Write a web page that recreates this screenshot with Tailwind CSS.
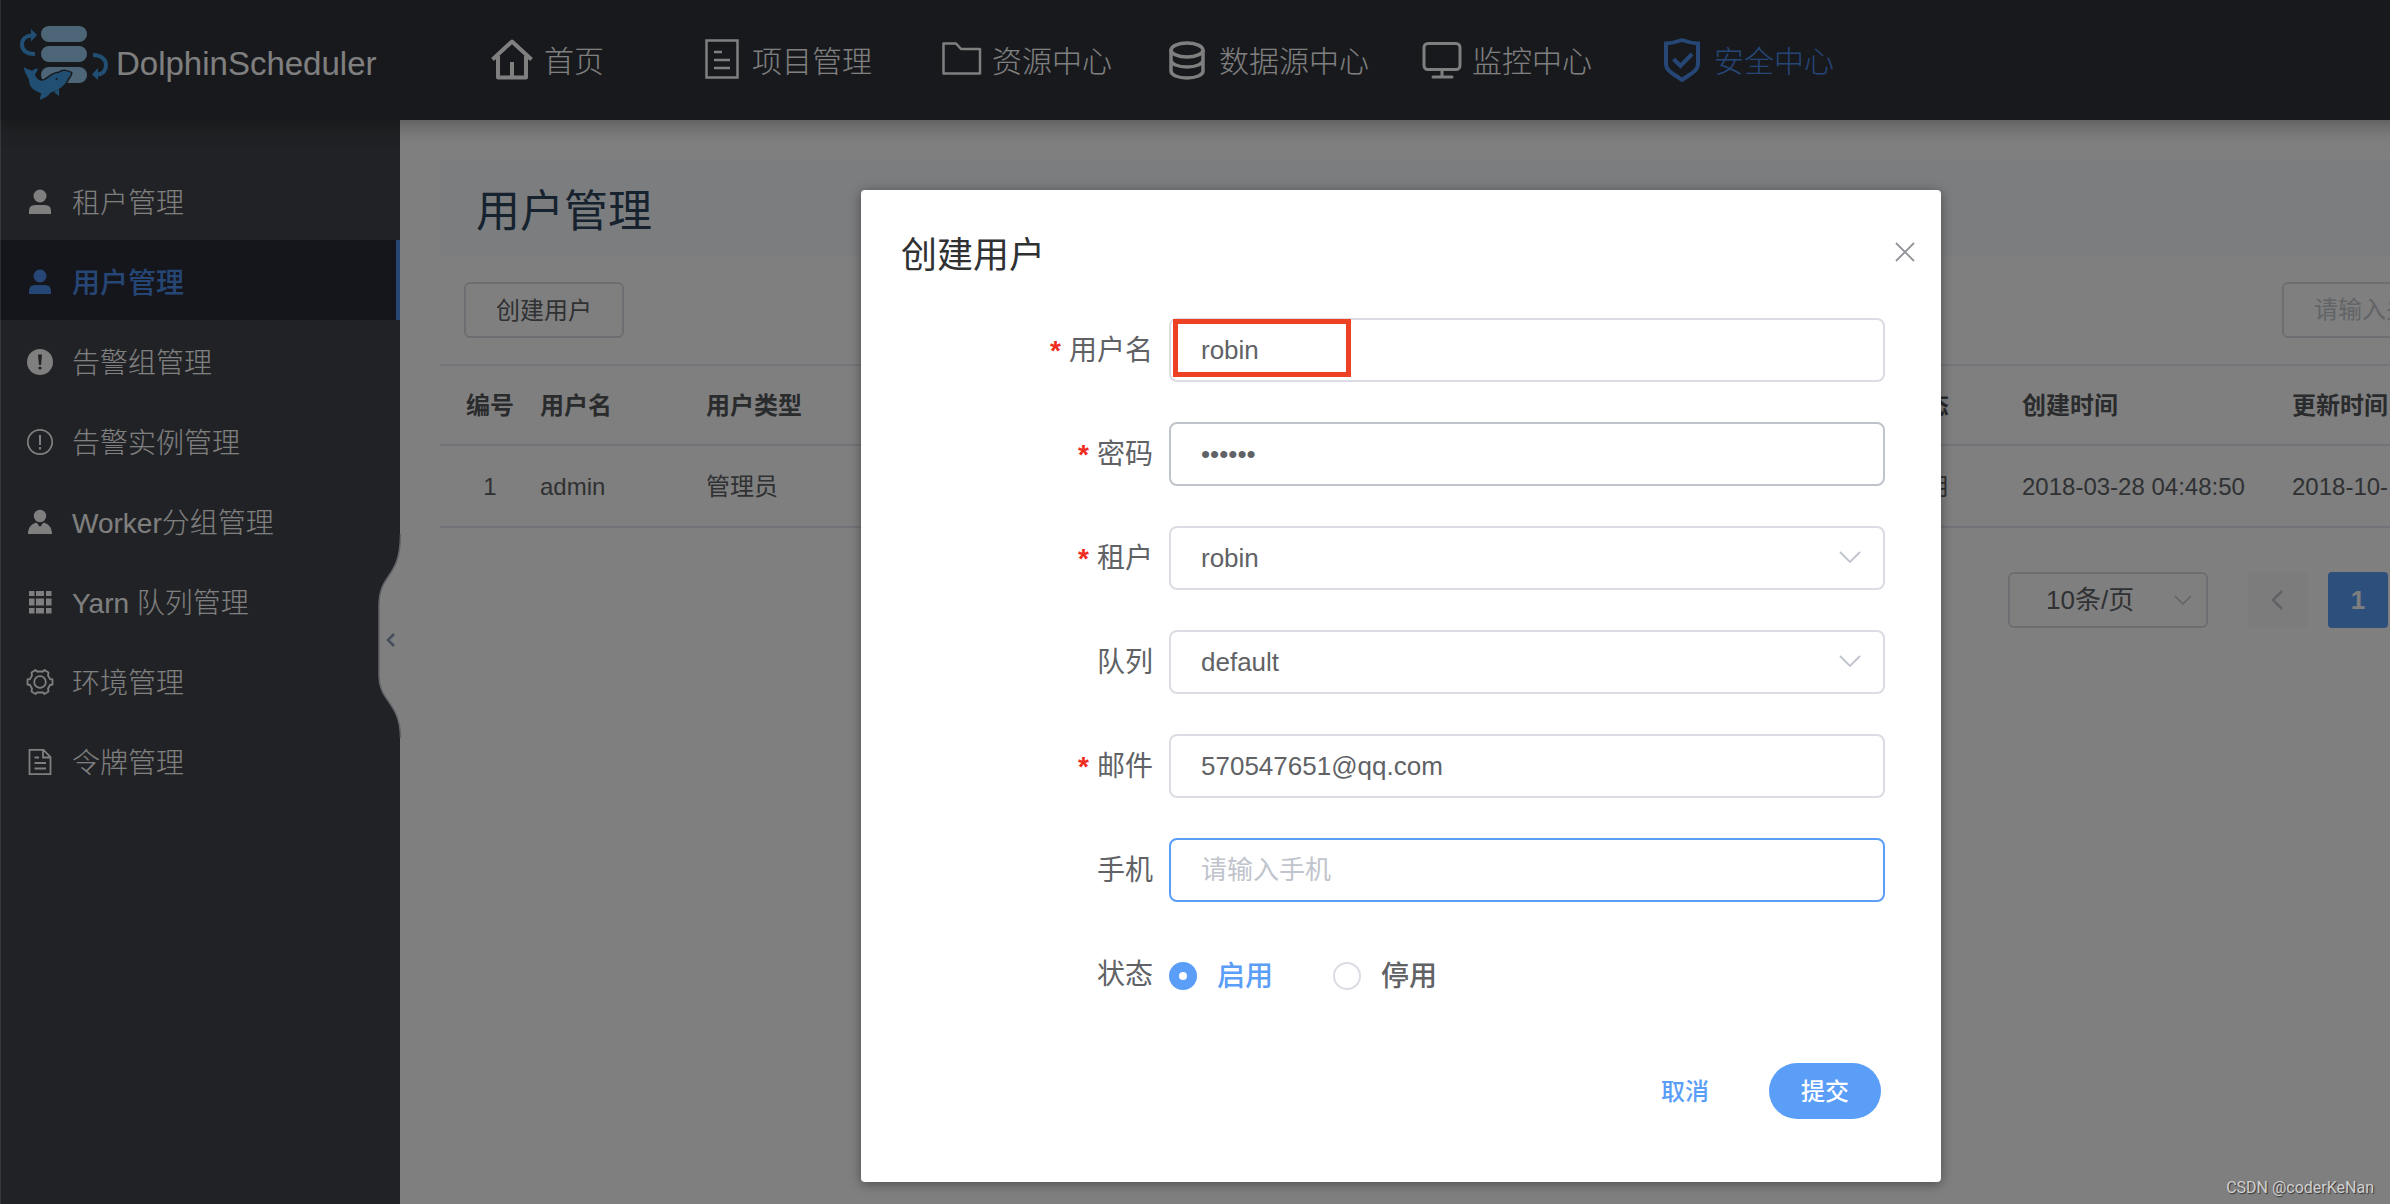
<!DOCTYPE html>
<html lang="zh-CN">
<head>
<meta charset="utf-8">
<meta name="viewport" content="width=device-width, initial-scale=1">
<title>DolphinScheduler</title>
<script src="https://cdn.jsdelivr.net/npm/@tailwindcss/browser@4"></script>
</head>
<body class="relative min-h-screen overflow-hidden bg-white font-['Liberation_Sans','Noto_Sans_CJK_SC',sans-serif] text-2xl text-[#606266]">

<div class="flex min-h-screen w-[calc(100%+412px)] flex-col">

  <!-- Top navigation -->
  <header class="relative z-10 flex h-[120px] items-center bg-[#2f3239] text-white shadow-[0_4px_20px_rgba(0,0,0,0.35)]">
    <a href="#" class="flex w-[490px] items-center">
      <svg class="h-[120px] w-[116px] shrink-0" viewBox="0 0 116 120" fill="none" aria-hidden="true">
        <g fill="#98ccf0"><rect x="41" y="26" width="46" height="16" rx="8"/><rect x="41" y="46" width="46" height="16" rx="8"/><rect x="41" y="67" width="46" height="16" rx="8"/></g>
        <g stroke="#429fe8" stroke-width="4"><path d="M35 54C25 54 22 49 22 44.500C22 39 26 36 31 35.500"/><path d="M93 55C102 55 106 60 106 65C106 70 103 74 98 74.500"/></g>
        <g fill="#429fe8"><path d="M31 29L37 35L31 41.500Z"/><path d="M98 68L92 74.500L98 80Z"/>
        <path stroke="#2f3239" stroke-width="3" paint-order="stroke" d="M24 67C27 70 31 69 32 71C34 69 36 68 38 69C37 72 35 73 35 75C37 80 41 82 45 80C50 77 53 73 59 73C63 70 68 71 71 73C71 76 68 77 67 81C63 87 58 90 50 93C49 96 44 98 40 100C40 97 41 95 41 93C34 91 29 87 29 80C28 76 24 73 24 67Z"/><path d="M54 92L59 96L59 89Z"/></g>
        <circle cx="56.500" cy="79" r="1" fill="#2f3239"/>
      </svg>
      <span class="pt-2 text-[33px] leading-10">DolphinScheduler</span>
    </a>
    <nav class="grid grid-cols-[210px_240px_225px_255px_240px_auto] text-[30px] leading-10 font-light">
      <a href="#" class="flex items-center gap-[10px]">
        <svg class="size-11" viewBox="0 0 44 44" fill="none" stroke="currentColor" stroke-width="4" aria-hidden="true"><path d="M2.500 21.500L22 3.500L41.500 21.500M8 18V39.500H36V18M22 39V24" stroke-linejoin="round"/></svg><span class="pt-1">首页</span></a>
      <a href="#" class="flex items-center gap-2">
        <svg class="size-11" viewBox="0 0 44 44" fill="none" stroke="currentColor" stroke-width="2.500" aria-hidden="true"><path d="M6.500 2.500H37.500V39.500H6.500Z"/><path d="M14 14H22M14 22H30M14 30H30"/></svg><span class="pt-1">项目管理</span></a>
      <a href="#" class="flex items-center gap-2">
        <svg class="size-11" viewBox="0 0 44 44" fill="none" stroke="currentColor" stroke-width="2.500" stroke-linejoin="round" aria-hidden="true"><path d="M3.500 35.500V5.500H16L21 11H40V35.500Z"/></svg><span class="pt-1">资源中心</span></a>
      <a href="#" class="flex items-center gap-[10px]">
        <svg class="size-11" viewBox="0 0 44 44" fill="none" stroke="currentColor" stroke-width="3.500" aria-hidden="true"><ellipse cx="22" cy="12" rx="16" ry="7"/><path d="M6 12V33C6 37 13 40 22 40S38 37 38 33V12M6 22C6 26 13 29 22 29S38 26 38 22"/></svg><span class="pt-1">数据源中心</span></a>
      <a href="#" class="flex items-center gap-2">
        <svg class="size-11" viewBox="0 0 44 44" fill="none" stroke="currentColor" stroke-width="3" stroke-linecap="round" aria-hidden="true"><rect x="4" y="5.500" width="36" height="26" rx="4"/><path d="M22 32V39M13 39H32"/></svg><span class="pt-1">监控中心</span></a>
      <a href="#" aria-current="page" class="flex items-center gap-[10px] text-[#4c8cea]">
        <svg class="size-11" viewBox="0 0 44 44" fill="none" stroke="currentColor" stroke-width="4" aria-hidden="true"><path d="M6 5.500Q14 5 22 2Q30 5 38 5.500V26C38 33 30 36 22 42C14 36 6 33 6 26Z"/><path d="M13.500 21L20.500 28L32 16"/></svg><span class="pt-1">安全中心</span></a>
    </nav>
  </header>

  <div class="flex flex-1">
    <!-- Side menu -->
    <aside class="relative w-[400px] shrink-0 bg-[#42444a] pt-10 text-[28px] leading-10 font-light text-white">
      <ul>
        <li><a href="#" class="flex h-20 items-center gap-[18px] pt-1 pl-[26px]"><svg class="size-7" viewBox="0 0 28 28" fill="currentColor" aria-hidden="true"><circle cx="14" cy="8" r="6.500"/><path d="M3 26V23Q3 17 9 17H19Q25 17 25 23V26Z"/></svg><span class="pt-1">租户管理</span></a></li>
        <li><a href="#" aria-current="page" class="flex h-20 items-center gap-[18px] border-r-4 border-[#4c8cea] bg-[#2b2d36] pt-1 pl-[26px] font-medium text-[#4c8cea]"><svg class="size-7" viewBox="0 0 28 28" fill="currentColor" aria-hidden="true"><circle cx="14" cy="8" r="6.500"/><path d="M3 26V23Q3 17 9 17H19Q25 17 25 23V26Z"/></svg><span class="pt-1">用户管理</span></a></li>
        <li><a href="#" class="flex h-20 items-center gap-[18px] pt-1 pl-[26px]"><svg class="size-7" viewBox="0 0 28 28" fill="currentColor" aria-hidden="true"><circle cx="14" cy="14" r="13"/><path d="M12 7Q14 5.500 16 7L15 17H13Z" fill="#42444a"/><circle cx="14" cy="20" r="1.600" fill="#42444a"/></svg><span class="pt-1">告警组管理</span></a></li>
        <li><a href="#" class="flex h-20 items-center gap-[18px] pt-1 pl-[26px]"><svg class="size-7" viewBox="0 0 28 28" fill="none" stroke="currentColor" stroke-width="1.700" aria-hidden="true"><circle cx="14" cy="14" r="12.200"/><path d="M14 7V17M14 19V21.500" stroke-width="2"/></svg><span class="pt-1">告警实例管理</span></a></li>
        <li><a href="#" class="flex h-20 items-center gap-[18px] pt-1 pl-[26px]"><svg class="size-7" viewBox="0 0 28 28" fill="currentColor" aria-hidden="true"><circle cx="14" cy="8" r="6.200"/><path d="M2 26C2 20 5 16 10.500 14.500L14 19L17.500 14.500C23 16 26 20 26 26Z"/></svg><span class="pt-1">Worker分组管理</span></a></li>
        <li><a href="#" class="flex h-20 items-center gap-[18px] pt-1 pl-[26px]"><svg class="size-7" viewBox="0 0 28 28" fill="currentColor" aria-hidden="true"><path d="M3 3h5.500v5H3zM10 3h8v5h-8zM20 3h5.500v5H20zM3 10.500h5.500v7H3zM10 10.500h8v7h-8zM20 10.500h5.500v7H20zM3 20h5.500v5.500H3zM10 20h8v5.500h-8zM20 20h5.500v5.500H20z"/></svg><span class="pt-1">Yarn 队列管理</span></a></li>
        <li><a href="#" class="flex h-20 items-center gap-[18px] pt-1 pl-[26px]"><svg class="size-7" viewBox="0 0 28 28" fill="none" stroke="currentColor" stroke-width="1.800" stroke-linejoin="round" aria-hidden="true"><circle cx="14" cy="14" r="5.800"/><path d="M9.500 2L11 3.500H17L18.500 2L22.500 4.500L22 7.500L24 11L26.500 11.500V16.500L24 17L22 20.500L22.500 23.500L18.500 26L17 24.500H11L9.500 26L5.500 23.500L6 20.500L4 17L1.500 16.500V11.500L4 11L6 7.500L5.500 4.500Z"/></svg><span class="pt-1">环境管理</span></a></li>
        <li><a href="#" class="flex h-20 items-center gap-[18px] pt-1 pl-[26px]"><svg class="size-7" viewBox="0 0 28 28" fill="none" stroke="currentColor" stroke-width="1.800" aria-hidden="true"><path d="M3.500 1.800H17.500L24.500 9V26.200H3.500ZM17 2V9.500H24.500M8.500 9.500H13M8.500 15H20M8.500 20.500H20"/></svg><span class="pt-1">令牌管理</span></a></li>
      </ul>
      <!-- Collapse handle on the menu's edge -->
      <button type="button" aria-label="收起菜单" class="absolute top-[414px] -right-[2px] h-[204px] w-6">
        <svg class="h-[204px] w-6" viewBox="0 0 24 204" fill="none" aria-hidden="true"><path d="M24 0H22.500C22.500 46 1 38 1 72V142C1 168 22.500 168 22.500 204H24Z" fill="#fff"/><path d="M22.500 0C22.500 46 1 38 1 72V142C1 168 22.500 168 22.500 204" stroke="#c4c8d4" stroke-width="1.500"/><path d="M16 94L10 100L16 106" stroke="#8d9ab8" stroke-width="2.500" transform="translate(0 6)"/></svg>
      </button>
    </aside>

    <!-- User list -->
    <main class="min-w-0 flex-1 p-10">
      <h1 class="flex h-24 items-center rounded bg-[#f8fbff] px-9 pt-2 text-[44px] leading-none text-[#2f455e]">用户管理</h1>
      <div class="flex items-center justify-between px-6 py-[26px]">
        <button type="button" class="h-14 w-40 rounded-md border-2 border-[#dcdce4] pt-0.5 text-2xl">创建用户</button>
        <input type="text" aria-label="关键词" placeholder="请输入关键词" class="h-14 w-[456px] rounded-md border-2 border-[#dcdce4] px-[30px] text-2xl placeholder:text-[#c5c8ce]">
      </div>
      <table class="w-full table-fixed border-t-2 border-[#e4ebf5] text-left text-2xl">
        <colgroup><col class="w-[100px]"><col class="w-[166px]"><col><col class="w-[121px]"><col class="w-[270px]"><col class="w-[470px]"></colgroup>
        <thead>
          <tr class="h-20 border-b-2 border-[#e4e4f0] text-[#55575b]"><th class="pt-0.5 text-center">编号</th><th class="pt-0.5">用户名</th><th class="pt-0.5">用户类型</th><th class="pt-0.5">状态</th><th class="pt-0.5">创建时间</th><th class="pt-0.5">更新时间</th></tr>
        </thead>
        <tbody>
          <tr class="h-[82px] border-b-2 border-[#e4e4f0]"><td class="pt-0.5 text-center">1</td><td class="pt-0.5">admin</td><td class="pt-0.5">管理员</td><td class="pt-0.5">启用</td><td class="pt-0.5">2018-03-28 04:48:50</td><td class="pt-0.5">2018-10-</td></tr>
        </tbody>
      </table>
      <div class="flex items-center justify-end pt-11 pr-[374px] text-[26px]">
        <div class="relative mr-10">
          <select aria-label="每页条数" class="h-14 w-[200px] appearance-none rounded-md border-2 border-[#dcdce4] pl-9 text-[26px]"><option>10条/页</option></select>
          <svg class="pointer-events-none absolute top-5 right-4 size-[18px]" viewBox="0 0 18 18" fill="none" stroke="#c0c4cc" stroke-width="1.500" aria-hidden="true"><path d="M1 4L9 12L17 4"/></svg>
        </div>
        <button type="button" aria-label="上一页" class="mr-5 flex h-14 w-[60px] items-center justify-center rounded bg-[#f8f8f9]"><svg class="size-5" viewBox="0 0 20 20" fill="none" stroke="#c0c4cc" stroke-width="2.500" aria-hidden="true"><path d="M14 1L5 10L14 19"/></svg></button>
        <button type="button" class="h-14 w-[60px] rounded bg-[#5a9ef8] font-bold text-white">1</button>
      </div>
    </main>
  </div>
</div>

<!-- Dialog: create a user -->
<div class="absolute inset-y-0 left-0 z-20 flex w-[calc(100%+411px)] items-start justify-center border-l border-white/10 bg-black/50 pt-[190px]">
  <form role="dialog" aria-labelledby="dialog-title" class="w-[1080px] rounded bg-white pt-9 pb-[63px] text-[28px] shadow-[0_2px_12px_rgba(0,0,0,0.4)]">
    <div class="flex h-14 items-center justify-between pr-5 pl-10">
      <h2 id="dialog-title" class="pt-1 text-[36px] leading-none text-[#303133]">创建用户</h2>
      <button type="button" aria-label="关闭" class="mb-1 flex size-8 items-center justify-center"><svg class="size-5" viewBox="0 0 20 20" fill="none" stroke="#909399" stroke-width="1.800" aria-hidden="true"><path d="M1 1L19 19M19 1L1 19"/></svg></button>
    </div>

    <div class="mt-9 grid grid-cols-[252px_1fr] gap-x-4 gap-y-10 pr-14 pl-10">
      <label for="name" class="flex h-16 items-center justify-end gap-2 pt-0.5"><span class="font-bold text-[#f02d1e]">*</span>用户名</label>
      <div class="relative">
        <input id="name" type="text" value="robin" class="h-16 w-full rounded-lg border-2 border-[#dcdce4] px-[30px] text-[26px]">
        <div class="pointer-events-none absolute top-px left-1 h-[58px] w-[178px] border-5 border-[#ee4025]"></div>
      </div>

      <label for="password" class="flex h-16 items-center justify-end gap-2 pt-0.5"><span class="font-bold text-[#f02d1e]">*</span>密码</label>
      <input id="password" type="password" value="robin1" class="h-16 w-full rounded-lg border-2 border-[#bfc4cc] px-[30px] text-[26px]">

      <label for="tenant" class="flex h-16 items-center justify-end gap-2 pt-0.5"><span class="font-bold text-[#f02d1e]">*</span>租户</label>
      <div class="relative">
        <select id="tenant" class="h-16 w-full appearance-none rounded-lg border-2 border-[#dcdce4] px-[30px] text-[26px]"><option>robin</option></select>
        <svg class="pointer-events-none absolute top-5 right-6 size-[22px]" viewBox="0 0 22 22" fill="none" stroke="#c0c4cc" stroke-width="1.800" aria-hidden="true"><path d="M1 6L11 16L21 6"/></svg>
      </div>

      <label for="queue" class="flex h-16 items-center justify-end pt-0.5">队列</label>
      <div class="relative">
        <select id="queue" class="h-16 w-full appearance-none rounded-lg border-2 border-[#dcdce4] px-[30px] text-[26px]"><option>default</option></select>
        <svg class="pointer-events-none absolute top-5 right-6 size-[22px]" viewBox="0 0 22 22" fill="none" stroke="#c0c4cc" stroke-width="1.800" aria-hidden="true"><path d="M1 6L11 16L21 6"/></svg>
      </div>

      <label for="email" class="flex h-16 items-center justify-end gap-2 pt-0.5"><span class="font-bold text-[#f02d1e]">*</span>邮件</label>
      <input id="email" type="email" value="570547651@qq.com" class="h-16 w-full rounded-lg border-2 border-[#dcdce4] px-[30px] text-[26px]">

      <label for="phone" class="flex h-16 items-center justify-end pt-0.5">手机</label>
      <input id="phone" type="tel" placeholder="请输入手机" class="h-16 w-full rounded-lg border-2 border-[#5a9ef8] px-[30px] text-[26px] placeholder:text-[#c0c4cc]">

      <span id="status-label" class="flex h-16 items-center justify-end pt-0.5">状态</span>
      <div role="radiogroup" aria-labelledby="status-label" class="flex h-16 items-center gap-[60px] pt-1 font-medium">
        <label class="flex items-center gap-5 text-[#5a9ef8]"><input type="radio" name="status" checked class="size-7 appearance-none rounded-full border-2 border-[#dcdce4] checked:border-10 checked:border-[#5a9ef8]"><span class="pt-0.5">启用</span></label>
        <label class="flex items-center gap-5"><input type="radio" name="status" class="size-7 appearance-none rounded-full border-2 border-[#dcdce4] checked:border-10 checked:border-[#5a9ef8]"><span class="pt-0.5">停用</span></label>
      </div>
    </div>

    <div class="mt-[57px] flex items-center justify-end gap-[60px] pr-[60px] text-2xl font-medium">
      <button type="button" class="h-14 pt-0.5 text-[#5a9ef8]">取消</button>
      <button type="submit" class="h-14 w-28 rounded-full bg-[#5a9ef8] pt-0.5 text-white">提交</button>
    </div>
  </form>
</div>

<p class="absolute right-4 bottom-1 z-30 font-[Roboto,sans-serif] text-base text-[#d0d0d0] [text-shadow:1px_1px_1px_#333]">CSDN @coderKeNan</p>
</body>
</html>
